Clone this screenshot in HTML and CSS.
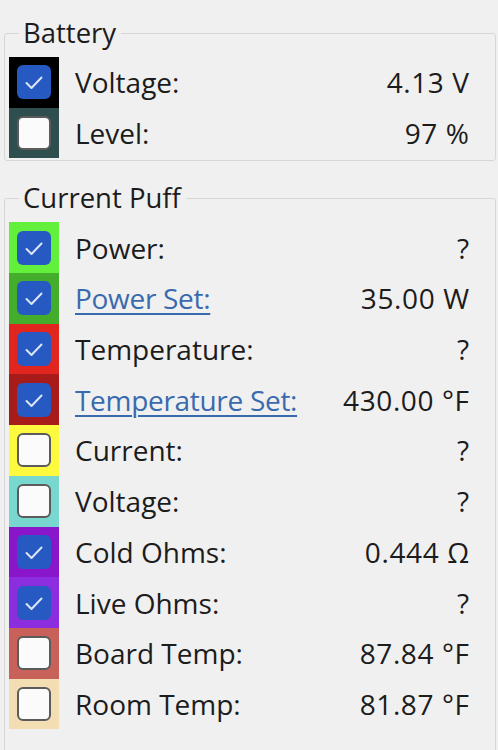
FILE: index.html
```html
<!DOCTYPE html>
<html>
<head>
<meta charset="utf-8">
<link rel="stylesheet" href="styles.css">
</head>
<body>
<fieldset class="group group-battery">
  <legend>Battery</legend>
  <div class="row">
    <div class="swatch c-black"><span class="box checked"><svg viewBox="0 0 34 34"><path d="M9.5 18 L14.5 23 L24.5 12.5"/></svg></span></div>
    <span class="label">Voltage:</span><span class="value">4.13 V</span>
  </div>
  <div class="row">
    <div class="swatch c-slate"><span class="box"></span></div>
    <span class="label">Level:</span><span class="value">97 %</span>
  </div>
</fieldset>

<fieldset class="group group-puff">
  <legend>Current Puff</legend>
  <div class="row">
    <div class="swatch c-lawn"><span class="box checked"><svg viewBox="0 0 34 34"><path d="M9.5 18 L14.5 23 L24.5 12.5"/></svg></span></div>
    <span class="label">Power:</span><span class="value">?</span>
  </div>
  <div class="row">
    <div class="swatch c-green"><span class="box checked"><svg viewBox="0 0 34 34"><path d="M9.5 18 L14.5 23 L24.5 12.5"/></svg></span></div>
    <a class="label link" href="#">Power Set:</a><span class="value">35.00 W</span>
  </div>
  <div class="row">
    <div class="swatch c-red"><span class="box checked"><svg viewBox="0 0 34 34"><path d="M9.5 18 L14.5 23 L24.5 12.5"/></svg></span></div>
    <span class="label">Temperature:</span><span class="value">?</span>
  </div>
  <div class="row">
    <div class="swatch c-darkred"><span class="box checked"><svg viewBox="0 0 34 34"><path d="M9.5 18 L14.5 23 L24.5 12.5"/></svg></span></div>
    <a class="label link" href="#">Temperature Set:</a><span class="value">430.00 °F</span>
  </div>
  <div class="row">
    <div class="swatch c-yellow"><span class="box"></span></div>
    <span class="label">Current:</span><span class="value">?</span>
  </div>
  <div class="row">
    <div class="swatch c-turq"><span class="box"></span></div>
    <span class="label">Voltage:</span><span class="value">?</span>
  </div>
  <div class="row">
    <div class="swatch c-violet"><span class="box checked"><svg viewBox="0 0 34 34"><path d="M9.5 18 L14.5 23 L24.5 12.5"/></svg></span></div>
    <span class="label">Cold Ohms:</span><span class="value">0.444 Ω</span>
  </div>
  <div class="row">
    <div class="swatch c-blueviolet"><span class="box checked"><svg viewBox="0 0 34 34"><path d="M9.5 18 L14.5 23 L24.5 12.5"/></svg></span></div>
    <span class="label">Live Ohms:</span><span class="value">?</span>
  </div>
  <div class="row">
    <div class="swatch c-indianred"><span class="box"></span></div>
    <span class="label">Board Temp:</span><span class="value">87.84 °F</span>
  </div>
  <div class="row">
    <div class="swatch c-wheat"><span class="box"></span></div>
    <span class="label">Room Temp:</span><span class="value">81.87 °F</span>
  </div>
</fieldset>
</body>
</html>
```

FILE: styles.css
```css
html, body {
  margin: 0;
  padding: 0;
  background: #f0f0f0;
}
body {
  font-family: "Open Sans", "Noto Sans", sans-serif;
  font-size: 28px;
  color: #1c1c1c;
  overflow: hidden;
}
.group {
  margin: 0 2px 0 4px;
  padding: 7px 0 2px 4px;
  border: 1px solid #d6d6d6;
  border-radius: 3px;
  min-width: 0;
}
.group-battery {
  margin-top: 16px;
}
.group-puff {
  margin-top: 20px;
  padding-bottom: 40px;
}
.group legend {
  margin-left: 10px;
  padding: 0 5px 0 4px;
  line-height: 34px;
  font-size: 27.5px;
}
.row {
  display: flex;
  align-items: center;
  height: 50.7px;
  padding-right: 26px;
}
.swatch {
  width: 50px;
  height: 100%;
  display: flex;
  align-items: center;
  justify-content: center;
  flex: none;
}
.box {
  width: 34px;
  height: 34px;
  box-sizing: border-box;
  border-radius: 6px;
  background: #fbfbfb;
  border: 2px solid #5b5b5b;
  display: block;
}
.box.checked {
  background: #2659c2;
  border: none;
}
.box svg {
  width: 34px;
  height: 34px;
  display: block;
}
.box svg path {
  fill: none;
  stroke: #dbe6f5;
  stroke-width: 2;
  stroke-linecap: round;
  stroke-linejoin: round;
}
.label {
  margin-left: 16px;
  white-space: nowrap;
}
.link {
  color: #3a6aae;
  letter-spacing: -0.3px;
  text-decoration: underline;
  text-decoration-thickness: 1.5px;
  text-underline-offset: 4px;
}
.value {
  margin-left: auto;
  white-space: nowrap;
  letter-spacing: 0.6px;
  margin-right: -0.6px;
}
.c-black { background: #000000; }
.c-slate { background: #2f4f4f; }
.c-lawn { background: #62f03c; }
.c-green { background: #44ae2c; }
.c-red { background: #e0261e; }
.c-darkred { background: #a81b1b; }
.c-yellow { background: #fcf93e; }
.c-turq { background: #78d8d0; }
.c-violet { background: #8a16cc; }
.c-blueviolet { background: #8c2ee0; }
.c-indianred { background: #c9615b; }
.c-wheat { background: #f3ddb2; }
```
